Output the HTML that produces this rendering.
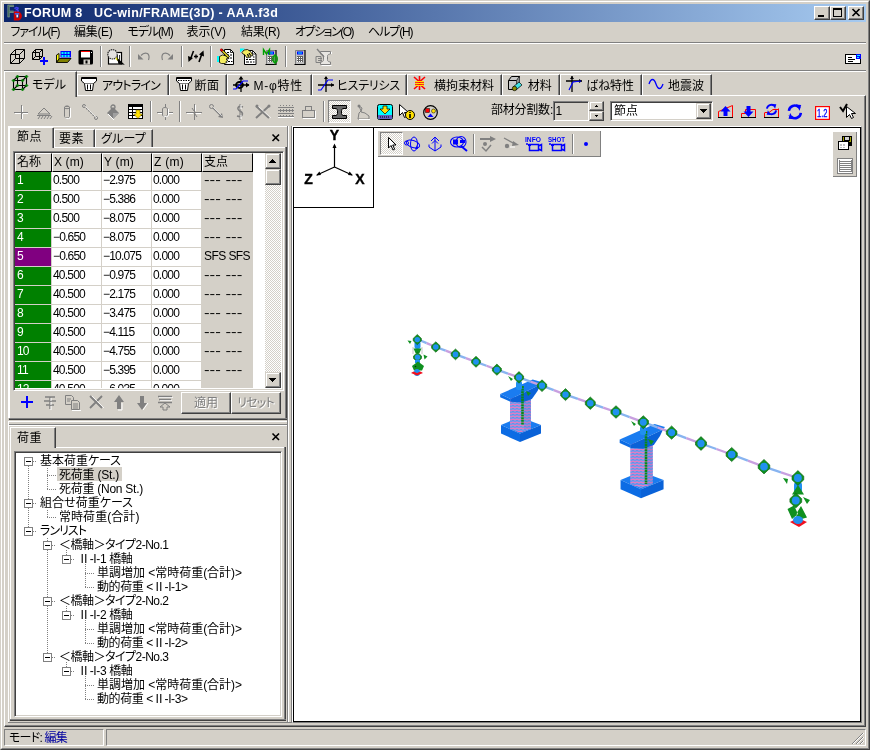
<!DOCTYPE html>
<html lang="ja"><head><meta charset="utf-8"><title>FORUM 8 UC-win/FRAME(3D) - AAA.f3d</title>
<style>
*{box-sizing:border-box;margin:0;padding:0}
html,body{width:870px;height:750px;overflow:hidden;background:#d4d0c8}
body{position:relative;font-family:"Liberation Sans","Noto Sans CJK JP",sans-serif;font-feature-settings:"palt";font-size:12px;color:#000;line-height:12px}
.a{position:absolute}
.t{position:absolute;white-space:nowrap}
.hl{position:absolute;height:2px;border-top:1px solid #808080;border-bottom:1px solid #fff}
.vl{position:absolute;width:2px;border-left:1px solid #808080;border-right:1px solid #fff}
.raised{border:1px solid;border-color:#fff #404040 #404040 #fff;box-shadow:inset -1px -1px 0 #808080,inset 1px 1px 0 #d4d0c8;background:#d4d0c8}
.raised2{border:1px solid;border-color:#d4d0c8 #404040 #404040 #d4d0c8;box-shadow:inset -1px -1px 0 #808080,inset 1px 1px 0 #fff;background:#d4d0c8}
.sunk1{border:1px solid;border-color:#808080 #fff #fff #808080}
.sunk2{border:1px solid;border-color:#808080 #fff #fff #808080;box-shadow:inset 1px 1px 0 #404040,inset -1px -1px 0 #d4d0c8}
svg{position:absolute;overflow:visible}
.w{position:absolute;left:0;top:0;width:870px;height:750px;will-change:transform}
</style></head><body><div class="w">
<!-- window frame -->
<div class="a" style="left:0;top:0;width:870px;height:750px;border:1px solid;border-color:#d4d0c8 #404040 #404040 #d4d0c8"></div>
<div class="a" style="left:1px;top:1px;width:868px;height:748px;border:1px solid;border-color:#fff #808080 #808080 #fff"></div>
<!-- title bar -->
<div class="a" id="title" style="left:4px;top:4px;width:862px;height:18px;background:linear-gradient(90deg,#0a246a,#a6caf0)"></div>
<div class="t" style="left:24px;top:6px;letter-spacing:0.34px;color:#fff;font-weight:bold;font-size:12.5px;line-height:14px">FORUM 8&nbsp;&nbsp; UC-win/FRAME(3D) - AAA.f3d</div>
<svg style="left:4px;top:3px" width="24" height="20" viewBox="0 0 24 20"><text x="3" y="14" font-size="16" font-weight="bold" fill="#47705f" stroke="#9cae9c" stroke-width="0.5" font-family="Liberation Sans,sans-serif" textLength="7" lengthAdjust="spacingAndGlyphs">F</text><text x="10.3" y="10" font-size="8.5" font-weight="bold" fill="#4444f4" stroke="#4444f4" stroke-width="0.5" font-family="Liberation Sans,sans-serif">3</text><text x="9.6" y="17" font-size="11.5" font-weight="bold" fill="#d40000" stroke="#d40000" stroke-width="0.9" font-family="Liberation Sans,sans-serif">D</text><rect x="12.4" y="11.4" width="1.8" height="3" fill="#f0e8ff"/><path d="M10.8 10.8h4.5" stroke="#4868f0" stroke-width="1.4"/></svg>
<div class="a raised" style="left:814px;top:6px;width:16px;height:14px;"></div>
<div class="a raised" style="left:830px;top:6px;width:16px;height:14px;"></div>
<div class="a raised" style="left:848px;top:6px;width:16px;height:14px;"></div>
<div class="a" style="left:818px;top:15px;width:6px;height:2px;background:#000"></div>
<div class="a" style="left:833px;top:8px;width:9px;height:9px;border:1px solid #000;border-top-width:2px"></div>
<svg style="left:852px;top:9px" width="8" height="7" viewBox="0 0 8 7"><path d="M0.5 0L7.5 7M7.5 0L0.5 7" stroke="#000" stroke-width="1.7" fill="none"/></svg>

<div class="t" style="left:10.5px;top:26px;letter-spacing:-1.13px;line-height:13px">ファイル(F)</div>
<div class="t" style="left:74px;top:26px;letter-spacing:-0.30px;line-height:13px">編集(E)</div>
<div class="t" style="left:127.5px;top:26px;letter-spacing:-1.14px;line-height:13px">モデル(M)</div>
<div class="t" style="left:186.5px;top:26px;letter-spacing:-0.10px;line-height:13px">表示(V)</div>
<div class="t" style="left:241px;top:26px;letter-spacing:-0.33px;line-height:13px">結果(R)</div>
<div class="t" style="left:295px;top:26px;letter-spacing:-1.51px;line-height:13px">オプション(O)</div>
<div class="t" style="left:368px;top:26px;letter-spacing:-1.10px;line-height:13px">ヘルプ(H)</div>
<div class="hl" style="left:4px;top:42px;width:862px;height:2px;"></div>

<svg style="left:10px;top:48px" width="16" height="16" viewBox="0 0 16 16"><path stroke="#000" fill="none" stroke-width="1" d="M0.500 6.500h9v9h-9zM5.500 1.500h9v9h-9zM0.500 6.500l5-5M9.500 6.500l5-5M0.500 15.500l5-5M9.500 15.500l5-5"/></svg>
<svg style="left:32px;top:48px" width="16" height="17" viewBox="0 0 16 17"><path stroke="#000" fill="none" stroke-width="1" d="M0.500 4.500h7v7h-7zM3.500 1.500h7v7h-7zM0.500 4.500l3-3M7.500 4.500l3-3M0.500 11.500l3-3M7.500 11.500l3-3"/><path d="M11 9h2v3h3v2h-3v3h-2v-3H8v-2h3z" fill="#00f"/></svg>
<svg style="left:56px;top:48px" width="16" height="16" viewBox="0 0 16 16"><path d="M0.500 7l2.500-1.500v5.500l-2.500 3.500z" fill="#ff0" stroke="#000" stroke-width="0.900"/><rect x="4.500" y="3" width="10.500" height="6.500" fill="#00f"/><path d="M5.500 4h2v2h-2zM8.500 4h2v2h-2zM11.500 4h2v2h-2zM5.500 7h2v2h-2zM8.500 7h2v2h-2zM11.500 7h2v2h-2z" fill="#0ff"/><path d="M3.500 10.500H15l-3.500 4H0.500z" fill="#808000" stroke="#000" stroke-width="0.900"/></svg>
<svg style="left:78px;top:48px" width="16" height="16" viewBox="0 0 16 16"><rect x="0.500" y="2" width="14.500" height="14.500" rx="1.500" fill="#000"/><rect x="3" y="3" width="9" height="6.500" fill="#fff"/><rect x="3" y="3" width="9" height="1" fill="#f00"/><rect x="5.500" y="11.500" width="6.500" height="5" fill="#d4d0c8"/><rect x="7.500" y="12.500" width="2" height="3" fill="#000"/><rect x="13" y="4" width="1" height="1" fill="#fff"/></svg>
<div class="vl" style="left:100px;top:46px;width:2px;height:21px;"></div>
<svg style="left:107px;top:48px" width="16" height="16" viewBox="0 0 16 16"><rect x="1.500" y="4.500" width="13" height="11.500" fill="#fff" stroke="#000" stroke-width="1.200"/><path d="M10.500 7v5.500h2V7" fill="none" stroke="#000" stroke-width="0.800"/><circle cx="5.500" cy="6.300" r="4.700" fill="#e4e2e0" stroke="#303030" stroke-width="1.200" stroke-dasharray="1.500 0.700"/><path d="M9 10l2 2" stroke="#e0e000" stroke-width="1.800"/><path d="M11 11.500l5 4.500l-4-0.500z" fill="#000" stroke="#000" stroke-width="1.200"/></svg>
<div class="vl" style="left:129px;top:46px;width:2px;height:21px;"></div>
<svg style="left:136px;top:48px" width="16" height="16" viewBox="0 0 16 16"><path d="M5 7.500Q8 4 11.500 5.500Q14 7.500 12.500 12" stroke="#808080" stroke-width="1.200" fill="none"/><path d="M2 6v5.500h5.500z" fill="#808080"/></svg>
<svg style="left:160px;top:48px" width="16" height="16" viewBox="0 0 16 16"><path d="M10 7.500Q7 4 3.500 5.500Q1 7.500 2.500 12" stroke="#808080" stroke-width="1.200" fill="none"/><path d="M13 6v5.500h-5.500z" fill="#808080"/></svg>
<div class="vl" style="left:181px;top:46px;width:2px;height:21px;"></div>
<svg style="left:188px;top:48px" width="16" height="16" viewBox="0 0 16 16"><path d="M5.500 3L2.500 11" stroke="#000" stroke-width="1.600"/><path d="M0 8l0.500 6l4.500-4z" fill="#000"/><path d="M11 14l3-8.500" stroke="#000" stroke-width="1.600"/><path d="M16 8.500l-0.500-6l-4.500 4z" fill="#000"/><path d="M6 8.500h4M8 6.500v4" stroke="#000" stroke-width="1.300"/></svg>
<div class="vl" style="left:210px;top:46px;width:2px;height:21px;"></div>
<svg style="left:217px;top:48px" width="17" height="17" viewBox="0 0 17 17"><path d="M7.500 1.500h6l3 3v12h-9z" fill="#fff" stroke="#000"/><path d="M13.500 1.500v3h3" fill="none" stroke="#000" stroke-width="0.800"/><path d="M10 4.500h2M10 7h2M13 7h2M13 10h2M11 13.500h2M14 13.500h1.500" stroke="#000"/><rect x="0" y="8" width="2" height="6" fill="#0ff"/><path d="M2.500 8.500l3-1.500l4 1l2.500 2.500l-3 0.500l2 1.500l-2 1l1 1l-2.500 1h-3l-2-1z" fill="#f4ec60" stroke="#000" stroke-width="0.800"/><path d="M4 1.500l8 8" stroke="#000" stroke-width="2.600"/><path d="M5.500 3l6 6" stroke="#f0e020" stroke-width="1.300"/><path d="M3.500 1l2 2" stroke="#e00000" stroke-width="1.800"/></svg>
<svg style="left:240px;top:48px" width="17" height="17" viewBox="0 0 17 17"><path d="M4.500 2.500h8l3.500 3.500v10.500h-11.500z" fill="#fff" stroke="#000"/><path d="M12.500 2.500v3.500h3.500" fill="none" stroke="#000" stroke-width="0.800"/><path d="M6 11.500h2M9 11.500h2.500M12.500 11.500h2M6 14h3M10 14h2M13 14h1.500M13 9h1.500" stroke="#000"/><path d="M0 0.500h5l-5 4z" fill="#0ff"/><path d="M2 4.500l2-2.500l3.500-0.500l3 2l2.500 4l-1.500 0.500l-2.500-3l2 4l-1.500 0.500l-2-3.500l1 3.500l-1.500 0.500l-2-3l-2-1z" fill="#f4ec60" stroke="#000" stroke-width="0.800"/></svg>
<svg style="left:263px;top:48px" width="16" height="17" viewBox="0 0 16 17"><rect x="3" y="2" width="10" height="14" fill="#c0c0c0"/><path d="M3.5 16V2.500h9.500" fill="none" stroke="#808080"/><path d="M13 2v14.500h-10.500" fill="none" stroke="#000" stroke-width="1.200"/><rect x="5" y="3.500" width="6" height="3" fill="#00f"/><rect x="6" y="4.500" width="4" height="1" fill="#0ff"/><rect x="5" y="8" width="6" height="6" fill="#fff"/><path d="M5 8.500h6M5 10.500h6M5 12.500h6M6.500 8v6M8.500 8v6M10.500 8v6" stroke="#606060" fill="none" stroke-width="1"/><path d="M0.500 7V1.500l3 4.500l3-4.500V7" stroke="#00a000" fill="none" stroke-width="1.400"/><ellipse cx="12" cy="11" rx="2.300" ry="3.300" stroke="#00a000" fill="none" stroke-width="1.300"/><path d="M12 6v10.500" stroke="#00a000" stroke-width="1.200"/></svg>
<div class="vl" style="left:285px;top:46px;width:2px;height:21px;"></div>
<svg style="left:292px;top:48px" width="16" height="17" viewBox="0 0 16 17"><rect x="3" y="2" width="10" height="14" fill="#c0c0c0"/><path d="M3.5 16V2.500h9.500" fill="none" stroke="#808080"/><path d="M13 2v14.500h-10.500" fill="none" stroke="#000" stroke-width="1.200"/><rect x="5" y="3.500" width="6" height="3" fill="#00f"/><rect x="6" y="4.500" width="4" height="1" fill="#0ff"/><rect x="5" y="8" width="6" height="6" fill="#fff"/><path d="M5 8.500h6M5 10.500h6M5 12.500h6M6.500 8v6M8.500 8v6M10.500 8v6" stroke="#606060" fill="none" stroke-width="1"/></svg>
<svg style="left:315px;top:48px" width="18" height="18" viewBox="0 0 18 18"><path d="M5.500 3.500h10v2.500c-3 0.500-3 1-3 3v2c0 2 0 2.500 3 3v2.500h-10v-2.500c3-0.500 3-1 3-3v-2c0-2 0-2.500-3-3z" fill="#e8e6e2" stroke="#808080"/><path d="M6.500 17.500h10M16.500 4v2" stroke="#fff"/><path d="M2 1l7 8" stroke="#808080" stroke-width="1.300"/><path d="M1 8.500h5v6H1zM3 10.500h4M3 12.500h4" stroke="#808080" fill="#d4d0c8"/></svg>
<svg style="left:845px;top:54px" width="16" height="10" viewBox="0 0 16 10" shape-rendering="crispEdges" ><rect x="0.5" y="0.5" width="15" height="9" rx="1" fill="#fff" stroke="#000"/><path d="M3 3h4M3 5h7M3 7h5" stroke="#000"/><rect x="11" y="0" width="5" height="5" fill="#00f"/><rect x="12" y="1" width="3" height="1" fill="#0ff"/><rect x="12" y="3" width="2" height="1" fill="#0ff"/></svg>
<div class="hl" style="left:4px;top:70px;width:862px;height:2px;"></div>

<div class="a" style="left:4px;top:95px;width:862px;height:632px;border:1px solid;border-color:#fff #404040 #404040 #fff;box-shadow:inset -1px -1px 0 #808080"></div>
<div class="a" style="left:4px;top:71px;width:73px;height:26px;background:#d4d0c8;border:1px solid;border-color:#fff #404040 transparent #fff;border-bottom:0;box-shadow:inset -1px 0 0 #808080"></div>
<svg style="left:12px;top:75px" width="17" height="17" viewBox="0 0 17 17"><path stroke="#000" fill="none" stroke-width="1.100" d="M1.500 5.500h9v9h-9zM5.500 1.500h9v9h-9zM1.500 5.500l4-4M10.500 5.500l4-4M1.500 14.500l4-4M10.500 14.500l4-4"/><g fill="#008000" stroke="#008000" stroke-width="0.600"><path d="M1.5 4l1.500 1.500l-1.500 1.500l-1.500-1.500z"/><path d="M10.5 4l1.500 1.500l-1.500 1.500l-1.500-1.500z"/><path d="M1.5 13l1.500 1.500l-1.500 1.500l-1.500-1.500z"/><path d="M10.5 13l1.500 1.500l-1.500 1.500l-1.500-1.500z"/><path d="M5.5 0l1.500 1.500l-1.500 1.500l-1.500-1.500z"/><path d="M14.5 0l1.500 1.500l-1.500 1.500l-1.500-1.500z"/><path d="M5.5 9l1.500 1.500l-1.500 1.500l-1.500-1.500z"/><path d="M14.5 9l1.500 1.500l-1.500 1.500l-1.500-1.500z"/></g></svg>
<div class="t" style="left:32px;top:79px;letter-spacing:0.04px;line-height:13px">モデル</div>
<div class="a" style="left:77px;top:74px;width:92px;height:21px;border:1px solid;border-color:#fff #404040 transparent #fff;border-bottom:0;box-shadow:inset -1px 0 0 #808080"></div>
<svg style="left:81px;top:76px" width="16" height="16" viewBox="0 0 16 16"><path d="M0.500 1.500h15v3.500l-3 2.500h-9l-3-2.500z" fill="#fff" stroke="#000"/><path d="M1 2.500h14" stroke="#000"/><path d="M3.500 7.500l1 7h7l1-7" fill="#fff" stroke="#000"/><path d="M6.500 8.500v5M9.500 8.500v5" stroke="#000"/></svg>
<div class="t" style="left:102px;top:80px;letter-spacing:-0.81px;line-height:13px">アウトライン</div>
<div class="a" style="left:169px;top:74px;width:58px;height:21px;border:1px solid;border-color:#fff #404040 transparent #fff;border-bottom:0;box-shadow:inset -1px 0 0 #808080"></div>
<svg style="left:176px;top:76px" width="16" height="16" viewBox="0 0 16 16"><path d="M0.500 1.500h15v3.500l-3 2.500h-9l-3-2.500z" fill="#fff" stroke="#000"/><path d="M1 2.500h14" stroke="#000"/><path d="M2 4.500h12" stroke="#000" stroke-dasharray="1.500 1"/><path d="M3.500 7.500l1 7h7l1-7" fill="#fff" stroke="#000"/><path d="M6.500 8.500v5M9.500 8.500v5" stroke="#000"/></svg>
<div class="t" style="left:194.5px;top:80px;letter-spacing:0.49px;line-height:13px">断面</div>
<div class="a" style="left:227px;top:74px;width:85px;height:21px;border:1px solid;border-color:#fff #404040 transparent #fff;border-bottom:0;box-shadow:inset -1px 0 0 #808080"></div>
<svg style="left:233px;top:76px" width="17" height="16" viewBox="0 0 17 16"><path d="M8 1v15M0 9h16" stroke="#000" stroke-width="1.300"/><path d="M8 0l-2.500 3.500h5zM16.500 9l-3.500-2.500v5z" fill="#000"/><ellipse cx="6.500" cy="9" rx="3.500" ry="3" fill="none" stroke="#000" stroke-width="1.800"/><path d="M0 13h3l7-8h5" stroke="#00f" fill="none" stroke-width="1.200"/></svg>
<div class="t" style="left:253.5px;top:80px;letter-spacing:0.74px;line-height:13px">M-φ特性</div>
<div class="a" style="left:312px;top:74px;width:95px;height:21px;border:1px solid;border-color:#fff #404040 transparent #fff;border-bottom:0;box-shadow:inset -1px 0 0 #808080"></div>
<svg style="left:318px;top:76px" width="16" height="16" viewBox="0 0 16 16"><path d="M8 1v15M0 9h16" stroke="#000" stroke-width="1.3"/><path d="M8 0l-2 3h4zM16 9l-3-2v4z" fill="#000"/><path d="M0 14h3l7-10h5" stroke="#00f" fill="none" stroke-width="1.2"/></svg>
<div class="t" style="left:337px;top:80px;letter-spacing:-0.20px;line-height:13px">ヒステリシス</div>
<div class="a" style="left:407px;top:74px;width:95px;height:21px;border:1px solid;border-color:#fff #404040 transparent #fff;border-bottom:0;box-shadow:inset -1px 0 0 #808080"></div>
<svg style="left:413px;top:76px" width="13" height="14" viewBox="0 0 13 14"><path d="M6.500 0v14M1 1l4.500 4M12 1L7.500 5M1 13l4.500-4M12 13L7.500 9" stroke="#f00" stroke-width="1.600" fill="none"/><path d="M2 5.500h9M2 7.500h9M2 9.500h9" stroke="#ffe000" stroke-width="1"/><path d="M2 6.500h9M2 8.500h9" stroke="#f00" stroke-width="0.800"/></svg>
<div class="t" style="left:434px;top:80px;letter-spacing:-0.00px;line-height:13px">横拘束材料</div>
<div class="a" style="left:502px;top:74px;width:58px;height:21px;border:1px solid;border-color:#fff #404040 transparent #fff;border-bottom:0;box-shadow:inset -1px 0 0 #808080"></div>
<svg style="left:508px;top:76px" width="15" height="15" viewBox="0 0 15 15"><path d="M0.500 4.500l3-4h8v9l-3 4h-8z" fill="#c8c8c8" stroke="#000"/><path d="M0.500 4.500h8v9M8.500 4.500l3-4" fill="none" stroke="#000"/><path d="M8.500 5v8l3-4V1z" fill="#909090"/><path d="M5 11l6-5l3 3l-6 5z" fill="#40e0e0" stroke="#000" stroke-width="0.700"/><circle cx="6.500" cy="12.500" r="2.200" fill="#909000" stroke="#000" stroke-width="0.700"/></svg>
<div class="t" style="left:527.8px;top:80px;letter-spacing:-0.01px;line-height:13px">材料</div>
<div class="a" style="left:560px;top:74px;width:82px;height:21px;border:1px solid;border-color:#fff #404040 transparent #fff;border-bottom:0;box-shadow:inset -1px 0 0 #808080"></div>
<svg style="left:566px;top:76px" width="16" height="16" viewBox="0 0 16 16"><path d="M6 0v16M0 5h16" stroke="#000" stroke-width="1.3"/><path d="M6 0l-2 3h4zM16 5l-3-2v4z" fill="#000"/><path d="M3 14l4-8l8-1" stroke="#00f" fill="none" stroke-width="1.2"/></svg>
<div class="t" style="left:586px;top:80px;letter-spacing:-0.04px;line-height:13px">ばね特性</div>
<div class="a" style="left:642px;top:74px;width:70px;height:21px;border:1px solid;border-color:#fff #404040 transparent #fff;border-bottom:0;box-shadow:inset -1px 0 0 #808080"></div>
<svg style="left:648px;top:76px" width="16" height="16" viewBox="0 0 16 16"><path d="M0 6c2-6 5-6 7 0s5 6 7 0" stroke="#00f" fill="none" stroke-width="1.3" transform="translate(1,2)"/></svg>
<div class="t" style="left:668px;top:80px;letter-spacing:-0.01px;line-height:13px">地震波</div>

<svg style="left:13px;top:104px" width="16" height="16" viewBox="0 0 16 16" shape-rendering="crispEdges" ><path stroke="#808080" fill="none" d="M8.500 1v14M1 8.500h14"/><path stroke="#fff" fill="none" d="M9.500 2v6M2 9.500h6M10 9.500h5M9.500 10v5"/></svg>
<svg style="left:36px;top:104px" width="16" height="16" viewBox="0 0 16 16"><path stroke="#808080" fill="none" d="M8 4L2 10h12z M1 11.500h14"/><path stroke="#808080" fill="none" d="M2 15l2-3M5 15l2-3M8 15l2-3M11 15l2-3M14 15l2-3"/></svg>
<svg style="left:59px;top:104px" width="16" height="16" viewBox="0 0 16 16"><path d="M5.500 3.500c0-2 5-2 5 0v9c0 2-5 2-5 0z" fill="#d4d0c8" stroke="#808080"/><path d="M11.500 4v9c0 2-4 2-5 1" stroke="#fff" fill="none"/><ellipse cx="8" cy="3.500" rx="2.500" ry="1.200" fill="none" stroke="#808080"/></svg>
<svg style="left:82px;top:104px" width="16" height="16" viewBox="0 0 16 16"><path d="M2 2l12 12" stroke="#808080" stroke-width="1.2" stroke-dasharray="2 1"/><circle cx="2" cy="2" r="1.500" fill="#d4d0c8" stroke="#808080"/><circle cx="14" cy="14" r="1.500" fill="#d4d0c8" stroke="#808080"/><path d="M3 2l12 12" stroke="#fff" stroke-width="0.600"/></svg>
<svg style="left:105px;top:104px" width="16" height="16" viewBox="0 0 16 16"><path d="M2 9l6-6l6 6l-6 6z" fill="#808080"/><path d="M8 9l6 0l-6 6z" fill="#a0a0a0"/><circle cx="8" cy="3" r="2" fill="none" stroke="#808080" stroke-width="1.300"/><path d="M3 10l6 6" stroke="#fff"/></svg>
<svg style="left:128px;top:104px" width="16" height="15" viewBox="0 0 16 15"><rect x="0.500" y="0.500" width="14" height="14" fill="#fff" stroke="#000"/><path d="M1 1.500h13M1 2.500h13M1 5.500h13M1 8.500h13M1 11.500h13M4.500 1v13" stroke="#000"/><path d="M8 6h4v4h2.500l-4.500 4.500l-4.500-4.500H8z" fill="#ffe000" stroke="#605000" stroke-width="0.500"/></svg>
<div class="vl" style="left:150px;top:101px;width:2px;height:21px;"></div>
<svg style="left:157px;top:104px" width="16" height="16" viewBox="0 0 16 16"><path stroke="#808080" fill="none" d="M0 8.500h5M11 8.500h5M8.500 0v3M8.500 13v3"/><path d="M5.500 5c0-2 5-2 5 0v6c0 2-5 2-5 0z" fill="#d4d0c8" stroke="#808080"/><path d="M11.500 5v6c0 2-4 2-5 1M1 9.500h4M12 9.500h4" stroke="#fff" fill="none"/></svg>
<div class="vl" style="left:179px;top:101px;width:2px;height:21px;"></div>
<svg style="left:186px;top:104px" width="16" height="16" viewBox="0 0 16 16"><path stroke="#808080" fill="none" d="M8.500 0v16M0 8.500h16"/><path stroke="#808080" fill="none" d="M6 4l2 3M11 13l-2-3"/><path stroke="#fff" fill="none" d="M9.500 1v6M1 9.500h6M10 9.500h5"/></svg>
<svg style="left:209px;top:104px" width="16" height="16" viewBox="0 0 16 16"><path d="M2 2l10 10" stroke="#808080" stroke-width="1.200"/><circle cx="2.500" cy="2.500" r="2" fill="#d4d0c8" stroke="#808080"/><path d="M14 14l-5-1l4-4z" fill="#808080"/><path d="M4 3l9 9" stroke="#fff" stroke-width="0.600"/></svg>
<svg style="left:232px;top:104px" width="16" height="16" viewBox="0 0 16 16"><path d="M11 3c-5-2-7 2-3 4c4 2 3 7-3 5" stroke="#808080" fill="none" stroke-width="1.500"/><path d="M8 0v16" stroke="#808080"/><path d="M9 1v4M9 11v4" stroke="#fff"/></svg>
<svg style="left:255px;top:104px" width="16" height="16" viewBox="0 0 16 16"><path d="M1 2l13 12M14 2L1 14" stroke="#808080" stroke-width="2"/><path d="M2 2l13 12" stroke="#fff" stroke-width="0.700" transform="translate(1,0)"/><circle cx="2" cy="2" r="1.500" fill="#808080"/><circle cx="14" cy="2" r="1.500" fill="#808080"/></svg>
<svg style="left:278px;top:104px" width="16" height="16" viewBox="0 0 16 16" shape-rendering="crispEdges" ><path stroke="#808080" fill="none" d="M0 3.500h16M0 6.500h16M0 9.500h16M0 12.500h16"/><path stroke="#808080" fill="none" d="M2 1v14M5 1v14M8 1v14M11 1v14M14 1v14" stroke-dasharray="1 1"/><path d="M0 13.500h16" stroke="#fff"/></svg>
<svg style="left:301px;top:104px" width="16" height="16" viewBox="0 0 16 16" shape-rendering="crispEdges" ><rect x="1.500" y="6.500" width="12" height="7" fill="#d4d0c8" stroke="#808080"/><rect x="4.500" y="2.500" width="6" height="4" fill="#d4d0c8" stroke="#808080"/><path d="M2 14.500h13M14.500 7v7" stroke="#fff"/></svg>
<div class="vl" style="left:323px;top:101px;width:2px;height:21px;"></div>
<div class="a" style="left:328px;top:100px;width:23px;height:23px;border:1px solid;border-color:#808080 #fff #fff #808080;background:repeating-conic-gradient(#fff 0 25%,#d4d0c8 0 50%) 0 0/2px 2px"></div>
<svg style="left:331.5px;top:105px" width="15" height="15" viewBox="0 0 15 15"><path d="M0.500 0.500h14v3h-3.500q-1.500 0.500-1.500 2v3q0 1.500 1.500 2h3.500v3h-14v-3h3.500q1.500-0.500 1.500-2v-3q0-1.500-1.500-2h-3.500z" fill="#686868" stroke="#000"/></svg>
<svg style="left:355px;top:104px" width="16" height="16" viewBox="0 0 16 16"><path d="M4 2l3 2l-1 4l4 1l4 3v3H3l1-6l2-2z" fill="#d4d0c8" stroke="#808080"/><circle cx="4" cy="2" r="1.500" fill="#808080"/><path d="M4 15.500h11" stroke="#fff"/></svg>
<svg style="left:376.5px;top:104px" width="16" height="16" viewBox="0 0 16 16"><rect x="0.500" y="0.500" width="15" height="15" rx="2" fill="#0ff" stroke="#000"/><rect x="1" y="11" width="14" height="4" fill="#6060c0"/><path d="M3 13h10" stroke="#000" stroke-dasharray="1 1"/><path d="M6 2h4v3h3l-5 5l-5-5h3z" fill="#ffe000" stroke="#000" stroke-width="0.700"/></svg>
<svg style="left:398px;top:104px" width="17" height="16" viewBox="0 0 17 16"><path d="M1.500 0.500v11l3-3l2 5l2-1l-2-4h4z" fill="#fff" stroke="#000"/><circle cx="12" cy="11" r="4.500" fill="#ffe000" stroke="#000"/><path d="M12 8v1M12 10v4" stroke="#000" stroke-width="1.600"/></svg>
<svg style="left:422.5px;top:105px" width="15" height="15" viewBox="0 0 15 15"><circle cx="7.500" cy="7.500" r="6.800" fill="#d4d0c8" stroke="#000" stroke-width="1.200"/><rect x="2.500" y="3.500" width="4" height="4" fill="#f00" stroke="#000" stroke-width="0.500"/><circle cx="10.500" cy="6" r="2" fill="#ffe000" stroke="#000" stroke-width="0.500"/><path d="M4.500 12l3-3.500l3 3.500z" fill="#00f"/></svg>
<div class="t" style="left:491px;top:103px;letter-spacing:-0.22px;line-height:14px">部材分割数:</div>
<div class="a sunk2" style="left:553px;top:101px;width:36px;height:20px;background:#d4d0c8"></div>
<div class="t" style="left:555.5px;top:104px;line-height:14px;color:#000">1</div>
<div class="a raised2" style="left:589px;top:101px;width:15px;height:10px;"></div>
<div class="a raised2" style="left:589px;top:111px;width:15px;height:10px;"></div>
<svg style="left:595px;top:105px" width="3" height="2" viewBox="0 0 3 2" shape-rendering="crispEdges" ><path d="M1 0h1v1h1v1H0V1h1z" fill="#000"/></svg>
<svg style="left:595px;top:115px" width="3" height="2" viewBox="0 0 3 2" shape-rendering="crispEdges" ><path d="M0 0h3v1H2v1H1V1H0z" fill="#000"/></svg>
<div class="a sunk2" style="left:610px;top:101px;width:103px;height:20px;background:#fff"></div>
<div class="t" style="left:614px;top:104px;letter-spacing:-0.01px;line-height:14px">節点</div>
<div class="a raised2" style="left:696px;top:103px;width:15px;height:16px;"></div>
<svg style="left:700px;top:109px" width="7" height="4" viewBox="0 0 7 4" shape-rendering="crispEdges" ><path d="M0 0h7v1H6v1H5v1H4v1H3V3H2V2H1V1H0z" fill="#000"/></svg>
<svg style="left:718px;top:104px" width="16" height="15" viewBox="0 0 16 15"><path d="M0.500 13V7.500L14.500 1.500V13" stroke="#f00" fill="none"/><path d="M0 13.500h15" stroke="#000"/><path d="M7.500 2l5 5.500h-3V12h-4V7.500h-3z" fill="#00f"/></svg>
<svg style="left:741px;top:104px" width="16" height="15" viewBox="0 0 16 15"><path d="M0.500 13V9.500H4.500V5.500H14.500V13" stroke="#f00" fill="none"/><path d="M0 13.500h15" stroke="#000"/><path d="M5.500 2h4v5.500h3l-5 5.500l-5-5.500h3z" fill="#00f"/></svg>
<svg style="left:764px;top:104px" width="16" height="15" viewBox="0 0 16 15"><path d="M0.500 13V8.500M14.500 13V4.500M1 8.500H5L9 5.500H14" stroke="#f00" fill="none"/><path d="M0 13.500h15" stroke="#000"/><g transform="translate(1.500,-0.500) scale(0.800)"><path d="M1.800 6.500A5.500 5.500 0 0 1 11 3" stroke="#00f" stroke-width="2.400" fill="none"/><path d="M8.500 0.500l5 0.500l-1.500 5.500z" fill="#00f"/><path d="M13.200 8.500A5.500 5.500 0 0 1 4 12" stroke="#00f" stroke-width="2.400" fill="none"/><path d="M6.500 14.500l-5-0.500l1.500-5.500z" fill="#00f"/></g></svg>
<svg style="left:787px;top:104px" width="16" height="16" viewBox="0 0 16 16"><g transform="translate(0,0) scale(1.050)"><path d="M1.800 6.500A5.500 5.500 0 0 1 11 3" stroke="#00f" stroke-width="2.400" fill="none"/><path d="M8.500 0.500l5 0.500l-1.500 5.500z" fill="#00f"/><path d="M13.200 8.500A5.500 5.500 0 0 1 4 12" stroke="#00f" stroke-width="2.400" fill="none"/><path d="M6.500 14.500l-5-0.500l1.500-5.500z" fill="#00f"/></g><path d="M10 0.500l3 3M5 14.500l-3-3" stroke="#00f" fill="none"/></svg>
<svg style="left:815px;top:105.5px" width="15" height="14" viewBox="0 0 15 14"><rect x="0.600" y="0.600" width="13.800" height="12.800" fill="#fff" stroke="#f00" stroke-width="1.200"/><text x="2" y="11" font-size="10.500" font-family="Liberation Sans,sans-serif" fill="#00f" stroke="#00f" stroke-width="0.300" textLength="10.500" lengthAdjust="spacingAndGlyphs">1.2</text></svg>
<svg style="left:840px;top:104px" width="16" height="16" viewBox="0 0 16 16"><path d="M0 3l3 4l4-7" stroke="#000" stroke-width="2" fill="none"/><path d="M6.500 2.500v11l3-3l2 4l2-1l-2-4h4z" fill="#fff" stroke="#000"/></svg>

<div class="a" style="left:8px;top:126px;width:279px;height:1px;background:#fff"></div>
<div class="a" style="left:8px;top:126px;width:2px;height:292px;background:#fff"></div>
<div class="a" style="left:10px;top:127px;width:43px;height:1px;background:#fff"></div>
<div class="a" style="left:285px;top:147px;width:2px;height:273px;border-left:1px solid #808080;border-right:1px solid #404040"></div>
<div class="a" style="left:9px;top:418px;width:278px;height:2px;border-top:1px solid #808080;border-bottom:1px solid #404040"></div>
<div class="a" style="left:287px;top:126px;width:2px;height:596px;border-left:1px solid #808080;border-right:1px solid #fff"></div>
<div class="a" style="left:52px;top:128px;width:2px;height:20px;border-left:1px solid #808080;border-right:1px solid #404040"></div>
<div class="t" style="left:17px;top:130px;letter-spacing:0.49px;line-height:14px">節点</div>
<div class="a" style="left:54px;top:129px;width:41px;height:18px;border:1px solid;border-color:#fff #404040 transparent #fff;border-bottom:0;box-shadow:inset -1px 0 0 #808080"></div>
<div class="t" style="left:59px;top:132px;letter-spacing:0.49px;line-height:14px">要素</div>
<div class="a" style="left:95px;top:129px;width:58px;height:18px;border:1px solid;border-color:#fff #404040 transparent #fff;border-bottom:0;box-shadow:inset -1px 0 0 #808080"></div>
<div class="t" style="left:101px;top:132px;letter-spacing:0.19px;line-height:14px">グループ</div>
<div class="a" style="left:54px;top:147px;width:231px;height:1px;background:#fff"></div>
<svg style="left:272px;top:134px" width="8" height="8" viewBox="0 0 8 8"><path d="M0.5 0.5L7 7M7 0.5L0.5 7" stroke="#000" stroke-width="1.6" fill="none"/></svg>
<div class="a sunk2" style="left:13px;top:151px;width:271px;height:240px;background:#fff"></div>
<div class="a" style="left:15px;top:153px;width:37px;height:19px;background:#d4d0c8;border:1px solid;border-color:#fff #000 #000 #fff"></div>
<div class="t" style="left:17px;top:155px;letter-spacing:-0.01px;line-height:14px">名称</div>
<div class="a" style="left:52px;top:153px;width:50px;height:19px;background:#d4d0c8;border:1px solid;border-color:#fff #000 #000 #fff"></div>
<div class="t" style="left:54px;top:155px;letter-spacing:0.13px;line-height:14px">X (m)</div>
<div class="a" style="left:102px;top:153px;width:50px;height:19px;background:#d4d0c8;border:1px solid;border-color:#fff #000 #000 #fff"></div>
<div class="t" style="left:104px;top:155px;letter-spacing:0.18px;line-height:14px">Y (m)</div>
<div class="a" style="left:152px;top:153px;width:50px;height:19px;background:#d4d0c8;border:1px solid;border-color:#fff #000 #000 #fff"></div>
<div class="t" style="left:154px;top:155px;letter-spacing:0.27px;line-height:14px">Z (m)</div>
<div class="a" style="left:202px;top:153px;width:51px;height:19px;background:#d4d0c8;border:1px solid;border-color:#fff #000 #000 #fff"></div>
<div class="t" style="left:204px;top:155px;letter-spacing:-0.01px;line-height:14px">支点</div>
<div class="a" style="left:15px;top:172px;width:238px;height:216px;overflow:hidden">
<div class="a" style="left:187px;top:0px;width:51px;height:216px;background:#d4d0c8"></div>
<div class="a" style="left:0px;top:0px;width:37px;height:18px;background:#008000"></div>
<div class="a" style="left:0px;top:18px;width:187px;height:1px;background:#d4d0c8"></div>
<div class="t" style="left:2px;top:1px;letter-spacing:-0.8px;color:#fff;line-height:14px">1</div>
<div class="t" style="left:38px;top:1px;letter-spacing:-0.8px;line-height:14px">0.500</div>
<div class="t" style="left:88px;top:1px;letter-spacing:-0.8px;line-height:14px">−2.975</div>
<div class="t" style="left:138px;top:1px;letter-spacing:-0.8px;line-height:14px">0.000</div>
<div class="t" style="left:189px;top:1px;line-height:14px;transform:scaleX(1.4);transform-origin:0 0">--- ---</div>
<div class="a" style="left:0px;top:19px;width:37px;height:18px;background:#008000"></div>
<div class="a" style="left:0px;top:37px;width:187px;height:1px;background:#d4d0c8"></div>
<div class="t" style="left:2px;top:20px;letter-spacing:-0.8px;color:#fff;line-height:14px">2</div>
<div class="t" style="left:38px;top:20px;letter-spacing:-0.8px;line-height:14px">0.500</div>
<div class="t" style="left:88px;top:20px;letter-spacing:-0.8px;line-height:14px">−5.386</div>
<div class="t" style="left:138px;top:20px;letter-spacing:-0.8px;line-height:14px">0.000</div>
<div class="t" style="left:189px;top:20px;line-height:14px;transform:scaleX(1.4);transform-origin:0 0">--- ---</div>
<div class="a" style="left:0px;top:38px;width:37px;height:18px;background:#008000"></div>
<div class="a" style="left:0px;top:56px;width:187px;height:1px;background:#d4d0c8"></div>
<div class="t" style="left:2px;top:39px;letter-spacing:-0.8px;color:#fff;line-height:14px">3</div>
<div class="t" style="left:38px;top:39px;letter-spacing:-0.8px;line-height:14px">0.500</div>
<div class="t" style="left:88px;top:39px;letter-spacing:-0.8px;line-height:14px">−8.075</div>
<div class="t" style="left:138px;top:39px;letter-spacing:-0.8px;line-height:14px">0.000</div>
<div class="t" style="left:189px;top:39px;line-height:14px;transform:scaleX(1.4);transform-origin:0 0">--- ---</div>
<div class="a" style="left:0px;top:57px;width:37px;height:18px;background:#008000"></div>
<div class="a" style="left:0px;top:75px;width:187px;height:1px;background:#d4d0c8"></div>
<div class="t" style="left:2px;top:58px;letter-spacing:-0.8px;color:#fff;line-height:14px">4</div>
<div class="t" style="left:38px;top:58px;letter-spacing:-0.8px;line-height:14px">−0.650</div>
<div class="t" style="left:88px;top:58px;letter-spacing:-0.8px;line-height:14px">−8.075</div>
<div class="t" style="left:138px;top:58px;letter-spacing:-0.8px;line-height:14px">0.000</div>
<div class="t" style="left:189px;top:58px;line-height:14px;transform:scaleX(1.4);transform-origin:0 0">--- ---</div>
<div class="a" style="left:0px;top:76px;width:37px;height:18px;background:#800080"></div>
<div class="a" style="left:0px;top:94px;width:187px;height:1px;background:#d4d0c8"></div>
<div class="t" style="left:2px;top:77px;letter-spacing:-0.8px;color:#fff;line-height:14px">5</div>
<div class="t" style="left:38px;top:77px;letter-spacing:-0.8px;line-height:14px">−0.650</div>
<div class="t" style="left:88px;top:77px;letter-spacing:-0.8px;line-height:14px">−10.075</div>
<div class="t" style="left:138px;top:77px;letter-spacing:-0.8px;line-height:14px">0.000</div>
<div class="t" style="left:189px;top:77px;letter-spacing:-0.57px;line-height:14px">SFS SFS</div>
<div class="a" style="left:0px;top:95px;width:37px;height:18px;background:#008000"></div>
<div class="a" style="left:0px;top:113px;width:187px;height:1px;background:#d4d0c8"></div>
<div class="t" style="left:2px;top:96px;letter-spacing:-0.8px;color:#fff;line-height:14px">6</div>
<div class="t" style="left:38px;top:96px;letter-spacing:-0.8px;line-height:14px">40.500</div>
<div class="t" style="left:88px;top:96px;letter-spacing:-0.8px;line-height:14px">−0.975</div>
<div class="t" style="left:138px;top:96px;letter-spacing:-0.8px;line-height:14px">0.000</div>
<div class="t" style="left:189px;top:96px;line-height:14px;transform:scaleX(1.4);transform-origin:0 0">--- ---</div>
<div class="a" style="left:0px;top:114px;width:37px;height:18px;background:#008000"></div>
<div class="a" style="left:0px;top:132px;width:187px;height:1px;background:#d4d0c8"></div>
<div class="t" style="left:2px;top:115px;letter-spacing:-0.8px;color:#fff;line-height:14px">7</div>
<div class="t" style="left:38px;top:115px;letter-spacing:-0.8px;line-height:14px">40.500</div>
<div class="t" style="left:88px;top:115px;letter-spacing:-0.8px;line-height:14px">−2.175</div>
<div class="t" style="left:138px;top:115px;letter-spacing:-0.8px;line-height:14px">0.000</div>
<div class="t" style="left:189px;top:115px;line-height:14px;transform:scaleX(1.4);transform-origin:0 0">--- ---</div>
<div class="a" style="left:0px;top:133px;width:37px;height:18px;background:#008000"></div>
<div class="a" style="left:0px;top:151px;width:187px;height:1px;background:#d4d0c8"></div>
<div class="t" style="left:2px;top:134px;letter-spacing:-0.8px;color:#fff;line-height:14px">8</div>
<div class="t" style="left:38px;top:134px;letter-spacing:-0.8px;line-height:14px">40.500</div>
<div class="t" style="left:88px;top:134px;letter-spacing:-0.8px;line-height:14px">−3.475</div>
<div class="t" style="left:138px;top:134px;letter-spacing:-0.8px;line-height:14px">0.000</div>
<div class="t" style="left:189px;top:134px;line-height:14px;transform:scaleX(1.4);transform-origin:0 0">--- ---</div>
<div class="a" style="left:0px;top:152px;width:37px;height:18px;background:#008000"></div>
<div class="a" style="left:0px;top:170px;width:187px;height:1px;background:#d4d0c8"></div>
<div class="t" style="left:2px;top:153px;letter-spacing:-0.8px;color:#fff;line-height:14px">9</div>
<div class="t" style="left:38px;top:153px;letter-spacing:-0.8px;line-height:14px">40.500</div>
<div class="t" style="left:88px;top:153px;letter-spacing:-0.8px;line-height:14px">−4.115</div>
<div class="t" style="left:138px;top:153px;letter-spacing:-0.8px;line-height:14px">0.000</div>
<div class="t" style="left:189px;top:153px;line-height:14px;transform:scaleX(1.4);transform-origin:0 0">--- ---</div>
<div class="a" style="left:0px;top:171px;width:37px;height:18px;background:#008000"></div>
<div class="a" style="left:0px;top:189px;width:187px;height:1px;background:#d4d0c8"></div>
<div class="t" style="left:2px;top:172px;letter-spacing:-0.8px;color:#fff;line-height:14px">10</div>
<div class="t" style="left:38px;top:172px;letter-spacing:-0.8px;line-height:14px">40.500</div>
<div class="t" style="left:88px;top:172px;letter-spacing:-0.8px;line-height:14px">−4.755</div>
<div class="t" style="left:138px;top:172px;letter-spacing:-0.8px;line-height:14px">0.000</div>
<div class="t" style="left:189px;top:172px;line-height:14px;transform:scaleX(1.4);transform-origin:0 0">--- ---</div>
<div class="a" style="left:0px;top:190px;width:37px;height:18px;background:#008000"></div>
<div class="a" style="left:0px;top:208px;width:187px;height:1px;background:#d4d0c8"></div>
<div class="t" style="left:2px;top:191px;letter-spacing:-0.8px;color:#fff;line-height:14px">11</div>
<div class="t" style="left:38px;top:191px;letter-spacing:-0.8px;line-height:14px">40.500</div>
<div class="t" style="left:88px;top:191px;letter-spacing:-0.8px;line-height:14px">−5.395</div>
<div class="t" style="left:138px;top:191px;letter-spacing:-0.8px;line-height:14px">0.000</div>
<div class="t" style="left:189px;top:191px;line-height:14px;transform:scaleX(1.4);transform-origin:0 0">--- ---</div>
<div class="a" style="left:0px;top:209px;width:37px;height:18px;background:#008000"></div>
<div class="a" style="left:0px;top:227px;width:187px;height:1px;background:#d4d0c8"></div>
<div class="t" style="left:2px;top:210px;letter-spacing:-0.8px;color:#fff;line-height:14px">12</div>
<div class="t" style="left:38px;top:210px;letter-spacing:-0.8px;line-height:14px">40.500</div>
<div class="t" style="left:88px;top:210px;letter-spacing:-0.8px;line-height:14px">−6.035</div>
<div class="t" style="left:138px;top:210px;letter-spacing:-0.8px;line-height:14px">0.000</div>
<div class="t" style="left:189px;top:210px;line-height:14px;transform:scaleX(1.4);transform-origin:0 0">--- ---</div>
<div class="a" style="left:36px;top:0px;width:1px;height:216px;background:#d4d0c8"></div>
<div class="a" style="left:86px;top:0px;width:1px;height:216px;background:#d4d0c8"></div>
<div class="a" style="left:136px;top:0px;width:1px;height:216px;background:#d4d0c8"></div>
<div class="a" style="left:186px;top:0px;width:1px;height:216px;background:#d4d0c8"></div>
</div>
<div class="a" style="left:265px;top:153px;width:16px;height:235px;background:repeating-conic-gradient(#fff 0 25%,#d4d0c8 0 50%) 0 0/2px 2px"></div>
<div class="a raised2" style="left:265px;top:153px;width:16px;height:16px;"></div>
<div class="a raised2" style="left:265px;top:169px;width:16px;height:16px;"></div>
<div class="a raised2" style="left:265px;top:372px;width:16px;height:16px;"></div>
<svg style="left:269px;top:159px" width="7" height="4" viewBox="0 0 7 4" shape-rendering="crispEdges" ><path d="M3 0h1v1h1v1h1v1h1v1H0V3h1V2h1V1h1z" fill="#000"/></svg>
<svg style="left:269px;top:378px" width="7" height="4" viewBox="0 0 7 4" shape-rendering="crispEdges" ><path d="M0 0h7v1H6v1H5v1H4v1H3V3H2V2H1V1H0z" fill="#000"/></svg>
<svg style="left:20px;top:395px" width="14" height="14" viewBox="0 0 14 14" shape-rendering="crispEdges" ><path d="M6 1h2v5h5v2H8v5H6V8H1V6h5z" fill="#00f"/></svg>
<svg style="left:43px;top:395px" width="14" height="16" viewBox="0 0 14 16"><path d="M2 2h10M1 6h12M3 10h8M7 2v12" stroke="#808080" stroke-width="1.500" fill="none"/><path d="M8 3v3M8 7v3M8 11v4" stroke="#fff"/></svg>
<svg style="left:65px;top:395px" width="16" height="16" viewBox="0 0 16 16"><path d="M0.500 0.500h6l2 2v7h-8z" fill="#d4d0c8" stroke="#808080"/><path d="M6.500 5.500h6l2 2v7h-8z" fill="#d4d0c8" stroke="#808080"/><path d="M2 4h4M2 6h3M8 9h5M8 11h5M8 13h5" stroke="#808080"/><path d="M7 15.500h9" stroke="#fff"/></svg>
<svg style="left:89px;top:395px" width="15" height="15" viewBox="0 0 15 15"><path d="M1 1l12 12M13 1L1 13" stroke="#808080" stroke-width="1.800"/><path d="M3 1l12 12" stroke="#fff" stroke-width="0.800"/></svg>
<svg style="left:112px;top:395px" width="14" height="16" viewBox="0 0 14 16"><path d="M7 0l5 7H9v7H5V7H2z" fill="#808080"/><path d="M10 8v7H6" stroke="#fff" fill="none"/></svg>
<svg style="left:135px;top:395px" width="14" height="16" viewBox="0 0 14 16"><path d="M7 15l5-7H9V1H5v7H2z" fill="#808080"/><path d="M8 15l5-7" stroke="#fff" fill="none"/></svg>
<svg style="left:157px;top:395px" width="16" height="16" viewBox="0 0 16 16"><path d="M1 1.500h14M2 4.500h12M1 7.500h14" stroke="#808080" stroke-width="1.300"/><path d="M8 8l5 4h-3v3H6v-3H3z" fill="#d4d0c8" stroke="#808080"/><path d="M2 2.500h14M3 5.500h12" stroke="#fff" stroke-width="0.700"/></svg>
<div class="a raised" style="left:181px;top:392px;width:50px;height:22px;"></div>
<div class="a raised" style="left:231px;top:392px;width:50px;height:22px;"></div>
<div class="t" style="left:194px;top:396px;letter-spacing:-0.01px;color:#808080;text-shadow:1px 1px 0 #fff;line-height:14px">適用</div>
<div class="t" style="left:237px;top:396px;letter-spacing:-0.73px;color:#808080;text-shadow:1px 1px 0 #fff;line-height:14px">リセット</div>

<div class="a" style="left:8px;top:421px;width:279px;height:1px;background:#fff"></div>
<div class="a" style="left:8px;top:424px;width:279px;height:2px;border-top:1px solid #808080;border-bottom:1px solid #fff"></div>
<div class="a" style="left:8px;top:421px;width:1px;height:301px;background:#fff"></div>
<div class="a" style="left:10px;top:428px;width:1px;height:292px;background:#fff"></div>
<div class="a" style="left:284px;top:447px;width:2px;height:274px;border-left:1px solid #808080;border-right:1px solid #404040"></div>
<div class="a" style="left:10px;top:719px;width:276px;height:2px;border-top:1px solid #808080;border-bottom:1px solid #404040"></div>
<div class="a" style="left:8px;top:722px;width:854px;height:1px;background:#808080"></div>
<div class="a" style="left:10px;top:427px;width:46px;height:21px;border:1px solid;border-color:#fff #404040 transparent #fff;border-bottom:0;box-shadow:inset -1px 0 0 #808080"></div>
<div class="t" style="left:17px;top:431px;letter-spacing:0.49px;line-height:14px">荷重</div>
<div class="a" style="left:56px;top:447px;width:228px;height:1px;background:#fff"></div>
<svg style="left:272px;top:433px" width="8" height="8" viewBox="0 0 8 8"><path d="M0.5 0.5L7 7M7 0.5L0.5 7" stroke="#000" stroke-width="1.6" fill="none"/></svg>
<div class="a sunk2" style="left:14px;top:451px;width:268px;height:266px;background:#fff"></div>
<div class="a" style="left:28px;top:466px;width:1px;height:61px;background:repeating-linear-gradient(180deg,#808080 0 1px,transparent 1px 2px)"></div>
<div class="a" style="left:47px;top:468px;width:1px;height:22px;background:repeating-linear-gradient(180deg,#808080 0 1px,transparent 1px 2px)"></div>
<div class="a" style="left:47px;top:510px;width:1px;height:8px;background:repeating-linear-gradient(180deg,#808080 0 1px,transparent 1px 2px)"></div>
<div class="a" style="left:47px;top:538px;width:1px;height:115px;background:repeating-linear-gradient(180deg,#808080 0 1px,transparent 1px 2px)"></div>
<div class="a" style="left:66px;top:550px;width:1px;height:5px;background:repeating-linear-gradient(180deg,#808080 0 1px,transparent 1px 2px)"></div>
<div class="a" style="left:85px;top:564px;width:1px;height:24px;background:repeating-linear-gradient(180deg,#808080 0 1px,transparent 1px 2px)"></div>
<div class="a" style="left:66px;top:606px;width:1px;height:5px;background:repeating-linear-gradient(180deg,#808080 0 1px,transparent 1px 2px)"></div>
<div class="a" style="left:85px;top:620px;width:1px;height:24px;background:repeating-linear-gradient(180deg,#808080 0 1px,transparent 1px 2px)"></div>
<div class="a" style="left:66px;top:662px;width:1px;height:5px;background:repeating-linear-gradient(180deg,#808080 0 1px,transparent 1px 2px)"></div>
<div class="a" style="left:85px;top:676px;width:1px;height:24px;background:repeating-linear-gradient(180deg,#808080 0 1px,transparent 1px 2px)"></div>
<div class="t" style="left:40px;top:454px;letter-spacing:-0.04px;line-height:14px">基本荷重ケース</div>
<div class="a" style="left:33px;top:461px;width:4px;height:1px;background:repeating-linear-gradient(90deg,#808080 0 1px,transparent 1px 2px)"></div>
<div class="a" style="left:24px;top:457px;width:9px;height:9px;border:1px solid #808080;background:#fff"></div>
<div class="a" style="left:26px;top:461px;width:5px;height:1px;background:#000"></div>
<div class="a" style="left:57px;top:467px;width:65px;height:14px;background:#d4d0c8"></div>
<div class="t" style="left:59px;top:468px;letter-spacing:-0.22px;line-height:14px">死荷重 (St.)</div>
<div class="a" style="left:47px;top:475px;width:9px;height:1px;background:repeating-linear-gradient(90deg,#808080 0 1px,transparent 1px 2px)"></div>
<div class="t" style="left:59px;top:482px;letter-spacing:-0.26px;line-height:14px">死荷重 (Non St.)</div>
<div class="a" style="left:47px;top:489px;width:9px;height:1px;background:repeating-linear-gradient(90deg,#808080 0 1px,transparent 1px 2px)"></div>
<div class="t" style="left:40px;top:496px;letter-spacing:0.03px;line-height:14px">組合せ荷重ケース</div>
<div class="a" style="left:33px;top:503px;width:4px;height:1px;background:repeating-linear-gradient(90deg,#808080 0 1px,transparent 1px 2px)"></div>
<div class="a" style="left:24px;top:499px;width:9px;height:9px;border:1px solid #808080;background:#fff"></div>
<div class="a" style="left:26px;top:503px;width:5px;height:1px;background:#000"></div>
<div class="t" style="left:59px;top:510px;letter-spacing:0.06px;line-height:14px">常時荷重(合計)</div>
<div class="a" style="left:47px;top:517px;width:9px;height:1px;background:repeating-linear-gradient(90deg,#808080 0 1px,transparent 1px 2px)"></div>
<div class="t" style="left:40px;top:524px;letter-spacing:-0.98px;line-height:14px">ランリスト</div>
<div class="a" style="left:33px;top:531px;width:4px;height:1px;background:repeating-linear-gradient(90deg,#808080 0 1px,transparent 1px 2px)"></div>
<div class="a" style="left:24px;top:527px;width:9px;height:9px;border:1px solid #808080;background:#fff"></div>
<div class="a" style="left:26px;top:531px;width:5px;height:1px;background:#000"></div>
<div class="t" style="left:59px;top:538px;letter-spacing:-0.51px;line-height:14px">＜橋軸＞タイプ2-No.1</div>
<div class="a" style="left:52px;top:545px;width:4px;height:1px;background:repeating-linear-gradient(90deg,#808080 0 1px,transparent 1px 2px)"></div>
<div class="a" style="left:43px;top:541px;width:9px;height:9px;border:1px solid #808080;background:#fff"></div>
<div class="a" style="left:45px;top:545px;width:5px;height:1px;background:#000"></div>
<div class="t" style="left:78px;top:552px;letter-spacing:-0.36px;line-height:14px">Ⅱ-I-1 橋軸</div>
<div class="a" style="left:71px;top:559px;width:4px;height:1px;background:repeating-linear-gradient(90deg,#808080 0 1px,transparent 1px 2px)"></div>
<div class="a" style="left:62px;top:555px;width:9px;height:9px;border:1px solid #808080;background:#fff"></div>
<div class="a" style="left:64px;top:559px;width:5px;height:1px;background:#000"></div>
<div class="t" style="left:97px;top:566px;letter-spacing:-0.02px;line-height:14px">単調増加 &lt;常時荷重(合計)&gt;</div>
<div class="a" style="left:85px;top:573px;width:9px;height:1px;background:repeating-linear-gradient(90deg,#808080 0 1px,transparent 1px 2px)"></div>
<div class="t" style="left:97px;top:580px;letter-spacing:-0.40px;line-height:14px">動的荷重 &lt;Ⅱ-I-1&gt;</div>
<div class="a" style="left:85px;top:587px;width:9px;height:1px;background:repeating-linear-gradient(90deg,#808080 0 1px,transparent 1px 2px)"></div>
<div class="t" style="left:59px;top:594px;letter-spacing:-0.51px;line-height:14px">＜橋軸＞タイプ2-No.2</div>
<div class="a" style="left:52px;top:601px;width:4px;height:1px;background:repeating-linear-gradient(90deg,#808080 0 1px,transparent 1px 2px)"></div>
<div class="a" style="left:43px;top:597px;width:9px;height:9px;border:1px solid #808080;background:#fff"></div>
<div class="a" style="left:45px;top:601px;width:5px;height:1px;background:#000"></div>
<div class="t" style="left:78px;top:608px;letter-spacing:-0.36px;line-height:14px">Ⅱ-I-2 橋軸</div>
<div class="a" style="left:71px;top:615px;width:4px;height:1px;background:repeating-linear-gradient(90deg,#808080 0 1px,transparent 1px 2px)"></div>
<div class="a" style="left:62px;top:611px;width:9px;height:9px;border:1px solid #808080;background:#fff"></div>
<div class="a" style="left:64px;top:615px;width:5px;height:1px;background:#000"></div>
<div class="t" style="left:97px;top:622px;letter-spacing:-0.02px;line-height:14px">単調増加 &lt;常時荷重(合計)&gt;</div>
<div class="a" style="left:85px;top:629px;width:9px;height:1px;background:repeating-linear-gradient(90deg,#808080 0 1px,transparent 1px 2px)"></div>
<div class="t" style="left:97px;top:636px;letter-spacing:-0.40px;line-height:14px">動的荷重 &lt;Ⅱ-I-2&gt;</div>
<div class="a" style="left:85px;top:643px;width:9px;height:1px;background:repeating-linear-gradient(90deg,#808080 0 1px,transparent 1px 2px)"></div>
<div class="t" style="left:59px;top:650px;letter-spacing:-0.51px;line-height:14px">＜橋軸＞タイプ2-No.3</div>
<div class="a" style="left:52px;top:657px;width:4px;height:1px;background:repeating-linear-gradient(90deg,#808080 0 1px,transparent 1px 2px)"></div>
<div class="a" style="left:43px;top:653px;width:9px;height:9px;border:1px solid #808080;background:#fff"></div>
<div class="a" style="left:45px;top:657px;width:5px;height:1px;background:#000"></div>
<div class="t" style="left:78px;top:664px;letter-spacing:-0.36px;line-height:14px">Ⅱ-I-3 橋軸</div>
<div class="a" style="left:71px;top:671px;width:4px;height:1px;background:repeating-linear-gradient(90deg,#808080 0 1px,transparent 1px 2px)"></div>
<div class="a" style="left:62px;top:667px;width:9px;height:9px;border:1px solid #808080;background:#fff"></div>
<div class="a" style="left:64px;top:671px;width:5px;height:1px;background:#000"></div>
<div class="t" style="left:97px;top:678px;letter-spacing:-0.02px;line-height:14px">単調増加 &lt;常時荷重(合計)&gt;</div>
<div class="a" style="left:85px;top:685px;width:9px;height:1px;background:repeating-linear-gradient(90deg,#808080 0 1px,transparent 1px 2px)"></div>
<div class="t" style="left:97px;top:692px;letter-spacing:-0.40px;line-height:14px">動的荷重 &lt;Ⅱ-I-3&gt;</div>
<div class="a" style="left:85px;top:699px;width:9px;height:1px;background:repeating-linear-gradient(90deg,#808080 0 1px,transparent 1px 2px)"></div>

<div class="a" style="left:291px;top:126px;width:1px;height:596px;background:#808080"></div>
<div class="a" style="left:292px;top:126px;width:570px;height:597px;border:1px solid;border-color:#fff #808080 #808080 #fff"></div>
<div class="a" style="left:293px;top:127px;width:568px;height:595px;background:#fff;border:1px solid #000"></div>
<div class="a" style="left:293px;top:127px;width:81px;height:81px;border:1px solid #000;background:#fff"></div>
<svg style="left:293px;top:127px" width="81" height="81" viewBox="0 0 81 81"><path d="M41.500 40V18M41.500 40L59 48M41.500 40L24 48" stroke="#000" stroke-width="1.200" fill="none"/><path d="M41.500 16.500l-2 4.500h4zM60 48.500l-5-0.500l1.600-3.400zM23 48.500l5-0.500l-1.600-3.400z" fill="#000"/><text x="41.500" y="12.800" text-anchor="middle" font-family="Liberation Sans,sans-serif" font-weight="bold" font-size="14" stroke="#000" stroke-width="0.4">Y</text><text x="67" y="56.500" text-anchor="middle" font-family="Liberation Sans,sans-serif" font-weight="bold" font-size="14" stroke="#000" stroke-width="0.4">X</text><text x="15.500" y="56.500" text-anchor="middle" font-family="Liberation Sans,sans-serif" font-weight="bold" font-size="14" stroke="#000" stroke-width="0.4">Z</text></svg>
<div class="a" style="left:378px;top:131px;width:223px;height:26px;background:#d4d0c8;border-right:1px solid #808080;border-bottom:1px solid #808080"></div>
<div class="a" style="left:380px;top:132px;width:23px;height:23px;border:1px solid;border-color:#808080 #fff #fff #808080;background:repeating-conic-gradient(#fff 0 25%,#d4d0c8 0 50%) 0 0/2px 2px"></div>
<svg style="left:387px;top:137px" width="11" height="15" viewBox="0 0 11 15"><path d="M1.500 0.500v10.500l2.500-2.500l2 4.500l1.700-0.800l-2-4.200h3.300z" fill="#fff" stroke="#000"/></svg>
<svg style="left:404px;top:136px" width="18" height="16" viewBox="0 0 18 16"><ellipse cx="10" cy="8" rx="3.500" ry="7" stroke="#00f" fill="none" stroke-width="1"/><ellipse cx="9" cy="8" rx="7" ry="3.500" stroke="#00f" fill="none" stroke-width="1" transform="rotate(20 9 8)"/><circle cx="2.500" cy="7" r="2" stroke="#00f" fill="none"/><path d="M11 13l2-4l1 4z" fill="#00f"/></svg>
<svg style="left:428px;top:136px" width="14" height="16" viewBox="0 0 14 16"><path d="M7 1v14M3 5l4-4l4 4M4 7.500l3-3l3 3M1 11l6 4l6-4M1 11v-2.500M13 11v-2.500" stroke="#00f" fill="none" stroke-width="1"/></svg>
<svg style="left:450px;top:136px" width="18" height="16" viewBox="0 0 18 16"><ellipse cx="7" cy="6" rx="6.500" ry="5" stroke="#00f" fill="none" stroke-width="1.100"/><ellipse cx="11" cy="6" rx="5" ry="5.500" stroke="#00f" fill="none" stroke-width="1.100"/><path d="M3 3.500h5v5H3zM10 4h5v3h-5z" fill="#00f"/><path d="M11 10l6 5" stroke="#00f" stroke-width="2"/></svg>
<svg style="left:480px;top:136px" width="16" height="16" viewBox="0 0 16 16"><path d="M0 3h13" stroke="#808080" stroke-width="2"/><path d="M10 0l6 3l-6 3z" fill="#808080"/><circle cx="5" cy="8" r="2" fill="#808080"/><path d="M2 11l4 4l5-6" stroke="#808080" stroke-width="1.500" fill="none"/></svg>
<svg style="left:503px;top:136px" width="16" height="16" viewBox="0 0 16 16"><path d="M1 2l11 6" stroke="#808080" stroke-width="1.300"/><path d="M10 5l6 4l-7 1z" fill="#808080"/><circle cx="4" cy="10" r="2.200" fill="#808080"/><path d="M7 11h5" stroke="#fff"/></svg>
<svg style="left:525px;top:136px" width="17" height="16" viewBox="0 0 17 16"><text x="0" y="5.500" font-size="6.500" font-weight="bold" fill="#00f" font-family="Liberation Sans,sans-serif" textLength="16" lengthAdjust="spacingAndGlyphs">INFO</text><path d="M1 8h2M4.500 8.500h9v6h-9zM13.500 10l3-1.500v6l-3-1.500" stroke="#00f" stroke-width="1.500" fill="none"/><rect x="3" y="8" width="3" height="2" fill="#00f"/></svg>
<svg style="left:548px;top:136px" width="17" height="16" viewBox="0 0 17 16"><text x="0" y="5.500" font-size="6.500" font-weight="bold" fill="#00f" font-family="Liberation Sans,sans-serif" textLength="17" lengthAdjust="spacingAndGlyphs">SHOT</text><path d="M1 8h2M4.500 8.500h9v6h-9zM13.500 10l3-1.500v6l-3-1.500" stroke="#00f" stroke-width="1.500" fill="none"/><rect x="3" y="8" width="3" height="2" fill="#00f"/></svg>
<div class="vl" style="left:473px;top:134px;width:2px;height:20px;"></div>
<div class="vl" style="left:572px;top:134px;width:2px;height:20px;"></div>
<div class="a" style="left:584px;top:142px;width:4px;height:4px;background:#00f;border-radius:2px"></div>
<div class="a" style="left:833px;top:132px;width:24px;height:45px;background:#d4d0c8;border-right:1px solid #808080;border-bottom:1px solid #808080"></div>
<svg style="left:838px;top:136px" width="15" height="15" viewBox="0 0 15 15" shape-rendering="crispEdges" ><rect x="4" y="0" width="10" height="10" fill="#000"/><path d="M5.500 1v4.500h7V1" stroke="#a0a000" stroke-width="1.500" fill="none"/><rect x="7" y="1" width="4" height="3" fill="#d0d0d0"/><rect x="7" y="6" width="5" height="4" fill="#000"/><rect x="10" y="7" width="1" height="2" fill="#c0c0c0"/><rect x="0.500" y="5.500" width="10" height="8" fill="#fff" stroke="#000" stroke-width="1.300"/><path d="M2 8h2v2H2zM5 8h2v2H5zM2 11h2v1H2zM5 11h2v1H5z" fill="#c0c0c0"/></svg>
<svg style="left:837px;top:158px" width="16" height="16" viewBox="0 0 16 16" shape-rendering="crispEdges" ><rect x="0.500" y="0.500" width="15" height="15" fill="#fff" stroke="#808080"/><rect x="1.500" y="1.500" width="13" height="13" fill="#fff" stroke="#fff"/><path d="M3 3.500h11M3 5.500h11M3 7.500h11M3 9.500h11M3 11.500h11M3 13.500h11" stroke="#808080"/><path d="M2.500 2v12M14.500 2v12" stroke="#808080"/></svg>
<svg style="left:0px;top:0px" width="870" height="750" viewBox="0 0 870 750"><defs><pattern id="brick" width="4" height="3" patternUnits="userSpaceOnUse"><rect width="4" height="3" fill="#9a90dc"/><rect y="2" width="4" height="1" fill="#e07cc4"/><rect x="0" y="0" width="2" height="1" fill="#5c98ec"/><rect x="2" y="1" width="2" height="1" fill="#6c9cec"/></pattern></defs><path d="M501 425l19 -8l21 8l-21 8.5z" fill="#1a7cf0"/><path d="M501 425v8.5l19 8.5v-8.5z" fill="#0c6ce4"/><path d="M520 433.5v8.5l21 -8.5v-8.5z" fill="#0a62d8"/><rect x="510" y="397" width="21" height="32" fill="url(#brick)"/><path d="M510 429l10 3.5l11 -3.5z" fill="url(#brick)"/><rect x="524" y="397" width="7" height="32" fill="#5070d0" opacity="0.25"/><path d="M500.2 394.0L532.7 379.5L542.3 382.3L540.5 384.6L510.5 398.9z" fill="#1a7cf0"/><path d="M500.2 394.0L510.5 398.9L510.5 401.8L500.2 397.2z" fill="#0c6ce4"/><path d="M510.5 398.9L540.5 384.6L537.7 390.7L531.9 399.0L522.0 402.5L510.5 401.8z" fill="#0a62d8"/><path d="M620.575 480l20.425 -8.6l22.575 8.6l-22.575 9.1375z" fill="#1a7cf0"/><path d="M620.575 480v9.1375l20.425 9.1375v-9.1375z" fill="#0c6ce4"/><path d="M641 489.137v9.1375l22.575 -9.1375v-9.1375z" fill="#0a62d8"/><rect x="630.25" y="442.8" width="22.575" height="41.5" fill="url(#brick)"/><path d="M630.25 484.3l10.75 3.7625l11.825 -3.7625z" fill="url(#brick)"/><rect x="645.3" y="442.8" width="7.525" height="41.5" fill="#5070d0" opacity="0.25"/><path d="M619.7 439.6L654.7 424.0L665.0 427.0L663.0 429.5L630.8 444.8z" fill="#1a7cf0"/><path d="M619.7 439.6L630.8 444.8L630.8 448.0L619.7 443.0z" fill="#0c6ce4"/><path d="M630.8 444.8L663.0 429.5L660.0 436.0L653.8 445.0L643.1 448.7L630.8 448.0z" fill="#0a62d8"/><path d="M417.5 339.3L426.65 343.15" stroke="#88b4f0" stroke-width="2.300"/><path d="M426.65 343.15L435.8 347" stroke="#c8a0e0" stroke-width="2.300"/><path d="M435.8 347L445.65 350.7" stroke="#88b4f0" stroke-width="2.300"/><path d="M445.65 350.7L455.5 354.4" stroke="#c8a0e0" stroke-width="2.300"/><path d="M455.5 354.4L465.75 358.1" stroke="#88b4f0" stroke-width="2.300"/><path d="M465.75 358.1L476 361.8" stroke="#c8a0e0" stroke-width="2.300"/><path d="M476 361.8L486.45 365.75" stroke="#88b4f0" stroke-width="2.300"/><path d="M486.45 365.75L496.9 369.7" stroke="#c8a0e0" stroke-width="2.300"/><path d="M496.9 369.7L507.95 373.55" stroke="#88b4f0" stroke-width="2.300"/><path d="M507.95 373.55L519 377.4" stroke="#c8a0e0" stroke-width="2.300"/><path d="M519 377.4L530.5 381.55" stroke="#88b4f0" stroke-width="2.300"/><path d="M530.5 381.55L542 385.7" stroke="#c8a0e0" stroke-width="2.300"/><path d="M542 385.7L553.75 390.15" stroke="#88b4f0" stroke-width="2.300"/><path d="M553.75 390.15L565.5 394.6" stroke="#c8a0e0" stroke-width="2.300"/><path d="M565.5 394.6L577.9 398.9" stroke="#88b4f0" stroke-width="2.300"/><path d="M577.9 398.9L590.3 403.2" stroke="#c8a0e0" stroke-width="2.300"/><path d="M590.3 403.2L603.15 407.6" stroke="#88b4f0" stroke-width="2.300"/><path d="M603.15 407.6L616 412" stroke="#c8a0e0" stroke-width="2.300"/><path d="M616 412L629.65 417.1" stroke="#88b4f0" stroke-width="2.300"/><path d="M629.65 417.1L643.3 422.2" stroke="#c8a0e0" stroke-width="2.300"/><path d="M643.3 422.2L657.45 427.4" stroke="#88b4f0" stroke-width="2.300"/><path d="M657.45 427.4L671.6 432.6" stroke="#c8a0e0" stroke-width="2.300"/><path d="M671.6 432.6L686.3 438.05" stroke="#88b4f0" stroke-width="2.300"/><path d="M686.3 438.05L701 443.5" stroke="#c8a0e0" stroke-width="2.300"/><path d="M701 443.5L716.35 449" stroke="#88b4f0" stroke-width="2.300"/><path d="M716.35 449L731.7 454.5" stroke="#c8a0e0" stroke-width="2.300"/><path d="M731.7 454.5L747.85 460.6" stroke="#88b4f0" stroke-width="2.300"/><path d="M747.85 460.6L764 466.7" stroke="#c8a0e0" stroke-width="2.300"/><path d="M764 466.7L780.95 472.35" stroke="#88b4f0" stroke-width="2.300"/><path d="M780.95 472.35L797.9 478" stroke="#c8a0e0" stroke-width="2.300"/><path d="M522.5 386V425" stroke="#0a8a14" stroke-width="2.600" stroke-dasharray="2 0.600"/><path d="M646 431V484" stroke="#0a8a14" stroke-width="2.600" stroke-dasharray="2 0.600"/><rect x="516" y="381" width="6" height="9" rx="2" fill="#2090f0"/><rect x="640" y="426" width="6" height="9" rx="2" fill="#2090f0"/><path d="M508 376l5 3l-2 2zM526 391l5 2l-3 3zM631 421l5 3l-2 2zM648 439l6 2l-3 4z" fill="#109020"/><path d="M435.8 341.8L440.0 345.7L440.0 348.3L435.8 352.2L431.6 348.3L431.6 345.7z" fill="#109020" stroke="#086010" stroke-width="0.600"/><circle cx="435.8" cy="347" r="2.77136" fill="#2090f0"/><path d="M455.5 349.0L459.8 353.1L459.8 355.7L455.5 359.8L451.2 355.7L451.2 353.1z" fill="#109020" stroke="#086010" stroke-width="0.600"/><circle cx="455.5" cy="354.4" r="2.83478" fill="#2090f0"/><path d="M476.0 356.3L480.4 360.5L480.4 363.1L476.0 367.3L471.6 363.1L471.6 360.5z" fill="#109020" stroke="#086010" stroke-width="0.600"/><circle cx="476" cy="361.8" r="2.90078" fill="#2090f0"/><path d="M496.9 364.1L501.4 368.4L501.4 371.0L496.9 375.3L492.4 371.0L492.4 368.4z" fill="#109020" stroke="#086010" stroke-width="0.600"/><circle cx="496.9" cy="369.7" r="2.96807" fill="#2090f0"/><path d="M519.0 371.6L523.6 376.0L523.6 378.8L519.0 383.2L514.4 378.8L514.4 376.0z" fill="#109020" stroke="#086010" stroke-width="0.600"/><circle cx="519" cy="377.4" r="3.03922" fill="#2090f0"/><path d="M542.0 379.8L546.7 384.3L546.7 387.1L542.0 391.6L537.3 387.1L537.3 384.3z" fill="#109020" stroke="#086010" stroke-width="0.600"/><circle cx="542" cy="385.7" r="3.11327" fill="#2090f0"/><path d="M565.5 388.6L570.3 393.2L570.3 396.0L565.5 400.6L560.7 396.0L560.7 393.2z" fill="#109020" stroke="#086010" stroke-width="0.600"/><circle cx="565.5" cy="394.6" r="3.18893" fill="#2090f0"/><path d="M590.3 397.0L595.3 401.7L595.3 404.7L590.3 409.4L585.3 404.7L585.3 401.7z" fill="#109020" stroke="#086010" stroke-width="0.600"/><circle cx="590.3" cy="403.2" r="3.26877" fill="#2090f0"/><path d="M616.0 405.7L621.1 410.5L621.1 413.5L616.0 418.3L610.9 413.5L610.9 410.5z" fill="#109020" stroke="#086010" stroke-width="0.600"/><circle cx="616" cy="412" r="3.35151" fill="#2090f0"/><path d="M643.3 415.7L648.5 420.6L648.5 423.8L643.3 428.7L638.1 423.8L638.1 420.6z" fill="#109020" stroke="#086010" stroke-width="0.600"/><circle cx="643.3" cy="422.2" r="3.4394" fill="#2090f0"/><path d="M671.6 425.9L676.9 431.0L676.9 434.2L671.6 439.3L666.3 434.2L666.3 431.0z" fill="#109020" stroke="#086010" stroke-width="0.600"/><circle cx="671.6" cy="432.6" r="3.53052" fill="#2090f0"/><path d="M701.0 436.6L706.5 441.9L706.5 445.1L701.0 450.4L695.5 445.1L695.5 441.9z" fill="#109020" stroke="#086010" stroke-width="0.600"/><circle cx="701" cy="443.5" r="3.62517" fill="#2090f0"/><path d="M731.7 447.4L737.3 452.8L737.3 456.2L731.7 461.6L726.1 456.2L726.1 452.8z" fill="#109020" stroke="#086010" stroke-width="0.600"/><circle cx="731.7" cy="454.5" r="3.72401" fill="#2090f0"/><path d="M764.0 459.4L769.8 465.0L769.8 468.4L764.0 473.9L758.2 468.4L758.2 465.0z" fill="#109020" stroke="#086010" stroke-width="0.600"/><circle cx="764" cy="466.7" r="3.828" fill="#2090f0"/><path d="M413 347v7M422 347v7" stroke="#b8b8b8" stroke-width="0.800"/><rect x="414.500" y="341" width="6" height="8" rx="2.500" fill="#2090f0"/><path d="M413.500 348.500h8l-2 4.500h-4z" fill="#109020"/><path d="M417.3 334.5L421.4 338.4L421.4 340.8L417.3 344.7L413.2 340.8L413.2 338.4z" fill="#109020" stroke="#086010" stroke-width="0.600"/><circle cx="417.3" cy="339.6" r="2.706" fill="#2090f0"/><path d="M417.5 352.2L421.5 356.0L421.5 358.4L417.5 362.2L413.5 358.4L413.5 356.0z" fill="#109020" stroke="#086010" stroke-width="0.600"/><circle cx="417.5" cy="357.2" r="2.64" fill="#2090f0"/><rect x="415" y="360" width="5" height="3" fill="#2090f0"/><path d="M418 361.500l6 4.500l-2 4.500h-8l-2-4.500z" fill="#109020"/><circle cx="415.500" cy="366.500" r="0.800" fill="#053808"/><ellipse cx="417" cy="372.500" rx="3" ry="3.500" fill="#2090f0"/><path d="M411 373l2.500-1.500l3.500 1.500l3.500-1.500l2.500 1.500l-6 2.500z" fill="#f01020"/><path d="M407.500 340.500l4 0.500l-1.500 3zM423.500 354.500l4 2l-3 3z" fill="#109020"/><rect x="794" y="482" width="8" height="12" rx="3" fill="#2090f0"/><path d="M797.9 470.6L803.8 476.2L803.8 479.8L797.9 485.4L792.0 479.8L792.0 476.2z" fill="#109020" stroke="#086010" stroke-width="0.600"/><circle cx="797.9" cy="478" r="3.894" fill="#2090f0"/><path d="M798 485l6 9.500h-12z" fill="#109020"/><path d="M795.8 493.1L801.7 498.7L801.7 502.3L795.8 507.9L789.9 502.3L789.9 498.7z" fill="#109020" stroke="#086010" stroke-width="0.600"/><circle cx="795.8" cy="500.5" r="3.894" fill="#2090f0"/><path d="M794 505.500l-6.500 3.500l4.500 10l6-5zM801 506l6 11.500l-11 3l1-8z" fill="#109020"/><path d="M790 522l8-4l9 4l-8 5z" fill="#f01020"/><ellipse cx="798" cy="520" rx="5" ry="4" fill="#2090f0"/><path d="M783 478l5 1l-1 5zM803 497l7 3l-3 4z" fill="#109020"/></svg>

<div class="a sunk1" style="left:4px;top:729px;width:100px;height:17px;"></div>
<div class="a sunk1" style="left:106px;top:729px;width:760px;height:17px;"></div>
<div class="t" style="left:9px;top:732px;letter-spacing:-0.77px;line-height:13px">モード: <span style="color:#0000a0">編集</span></div>
<svg style="left:852px;top:733px" width="12" height="12" viewBox="0 0 12 12" shape-rendering="crispEdges" ><path d="M11 0L0 11M11 4L4 11M11 8L8 11" stroke="#808080" fill="none"/><path d="M12 0L1 11M12 4L5 11M12 8L9 11" stroke="#fff" fill="none"/></svg>

</div></body></html>
